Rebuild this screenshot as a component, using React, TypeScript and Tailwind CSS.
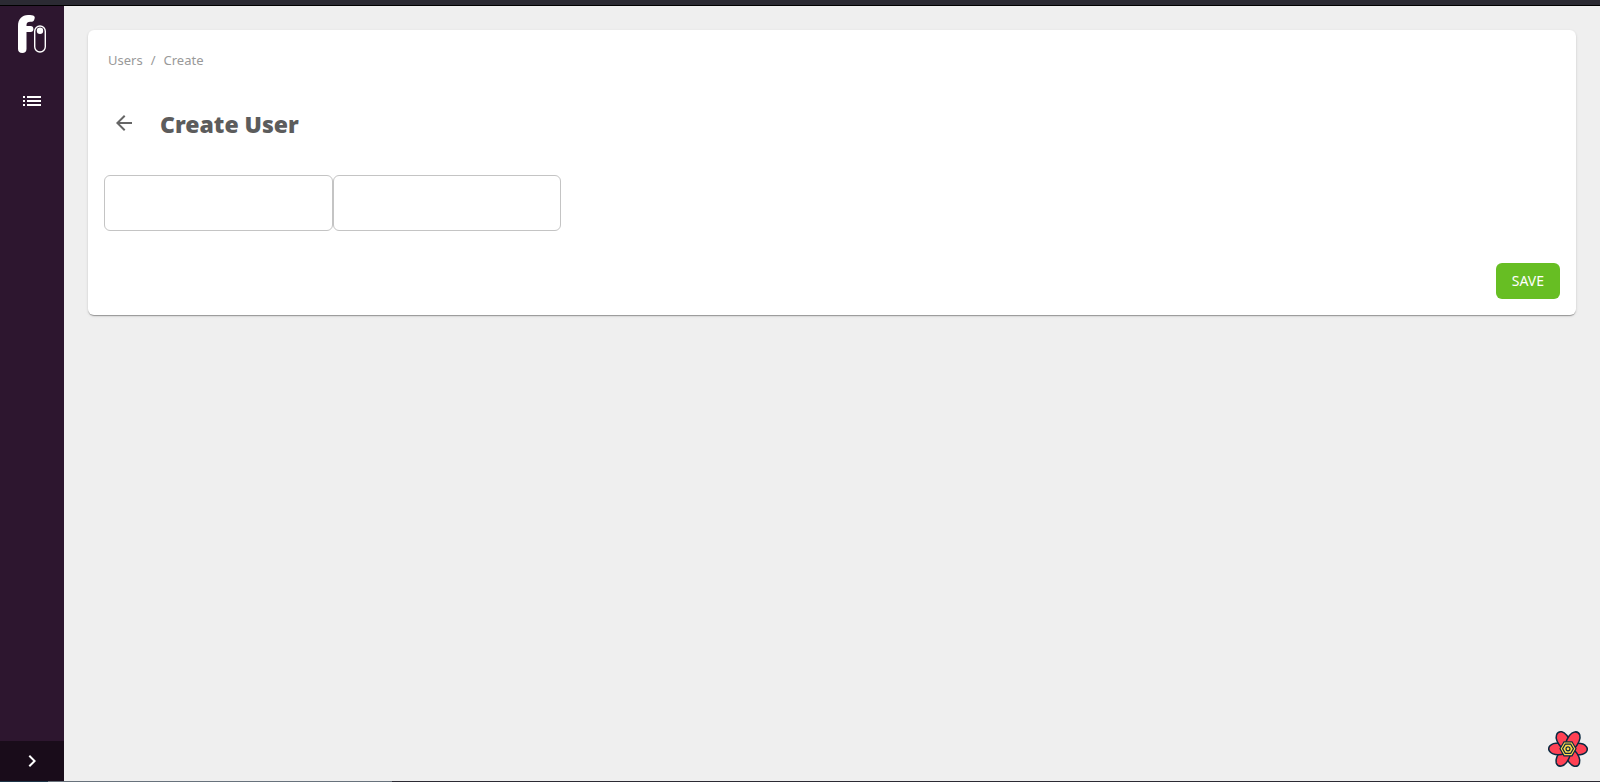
import React from "react";
import { MdArrowBack, MdChevronRight, MdList } from "react-icons/md";

const PETAL_ANGLES = [0, 60, 120, 180, 240, 300];

function Logo() {
  return (
    <svg width="32" height="40" viewBox="0 0 32 40" fill="none" aria-hidden="true">
      <path
        d="M2 35V12C2 5 6 1 12 1c3 0 5 .2 6 1 1 .7.9 2 .4 3.300-.5 1.700-1.200 2.700-2.900 2.500-3-.4-5 .4-5 3.200v1h4c2 0 2.900 1 2.900 2.900s-.9 3-2.900 3H10.500v17c0 2.600-1.600 4-4.200 4S2 37.600 2 35z"
        fill="#fff"
      />
      <rect x="18.700" y="12" width="10.600" height="26" rx="5.300" stroke="#fff" strokeWidth="1.400" />
      <circle cx="24" cy="16.800" r="3.200" fill="#fff" />
    </svg>
  );
}

function QueryFlower() {
  return (
    <svg width="40" height="40" viewBox="-20 -20 40 40" fill="none" aria-hidden="true">
      <g fill="#ff4154" stroke="#0b2940" strokeWidth="1.500">
        {PETAL_ANGLES.map((angle) => (
          <path
            key={angle}
            d="M4 5.500C9 6.200 15.500 5.800 18 3.200c1.600-1.900 1.600-4.200 0-6C15.500-5.800 9.500-6.200 3-4.800z"
            transform={`rotate(${angle})`}
          />
        ))}
      </g>
      <path d="M-8-.2-4-7.200H4L8-.2 4 6.800H-4z" fill="#ffd94c" stroke="#0b2940" strokeWidth="1.200" />
      <path d="M-5.400-.2-2.700-4.800H2.700L5.400-.2 2.700 4.400H-2.700z" stroke="#0b2940" strokeWidth="1.200" />
      <circle cy="-.2" r="2" stroke="#0b2940" strokeWidth="1.200" />
    </svg>
  );
}

function Sidebar() {
  return (
    <aside className="flex w-16 shrink-0 flex-col items-center bg-[#2d162f] text-white">
      <a href="#home" aria-label="Home" className="mt-2">
        <Logo />
      </a>
      <nav className="mt-[35px]">
        <a href="#users" aria-label="Users" className="block">
          <MdList size={24} />
        </a>
      </nav>
      <button
        type="button"
        aria-label="Expand menu"
        className="mt-auto flex h-10 w-full items-center justify-center bg-[#190c1a]"
      >
        <MdChevronRight size={24} />
      </button>
    </aside>
  );
}

function CreateUser() {
  return (
    <form
      className="rounded-md bg-white p-4 shadow-[0_2px_1px_-1px_rgba(0,0,0,0.2),0_1px_1px_rgba(0,0,0,0.14),0_1px_3px_rgba(0,0,0,0.12)]"
      onSubmit={(e) => e.preventDefault()}
    >
      <nav aria-label="Breadcrumb" className="flex gap-2 px-1 pt-1 text-[13px] leading-5 text-[#999]">
        <a href="#users">Users</a>
        <span>/</span>
        <span>Create</span>
      </nav>

      <div className="mt-[29px] flex h-12 items-center gap-6">
        <button type="button" aria-label="Back" className="ml-2 text-[#666]">
          <MdArrowBack size={24} />
        </button>
        <h1 className="pt-0.5 text-[23px] font-black text-[#5c5c5c]">Create User</h1>
      </div>

      <div className="mt-7 flex">
        <input aria-label="First name" className="h-14 w-[229px] rounded-md border border-[#c4c4c4] px-3 outline-none" />
        <input aria-label="Last name" className="h-14 w-[228px] rounded-md border border-[#c4c4c4] px-3 outline-none" />
      </div>

      <div className="mt-8 flex justify-end">
        <button type="submit" className="h-9 rounded-md bg-[#67be23] px-4 text-sm text-white">
          SAVE
        </button>
      </div>
    </form>
  );
}

export default function App() {
  return (
    <div className="flex min-h-screen flex-col bg-[#efefef] font-['Noto_Sans',sans-serif]">
      <div className="h-1.5 border-b border-black bg-[#2b2a33]" />
      <div className="flex flex-1">
        <Sidebar />
        <main className="min-w-0 flex-1 p-6">
          <CreateUser />
        </main>
      </div>
      <div className="flex h-px bg-[#2b2a33]">
        <div className="w-12 bg-[#1d3548]" />
        <div className="w-[344px] bg-[#68727c]" />
      </div>
      <button type="button" aria-label="Open query devtools" className="fixed right-3 bottom-[13px]">
        <QueryFlower />
      </button>
    </div>
  );
}
